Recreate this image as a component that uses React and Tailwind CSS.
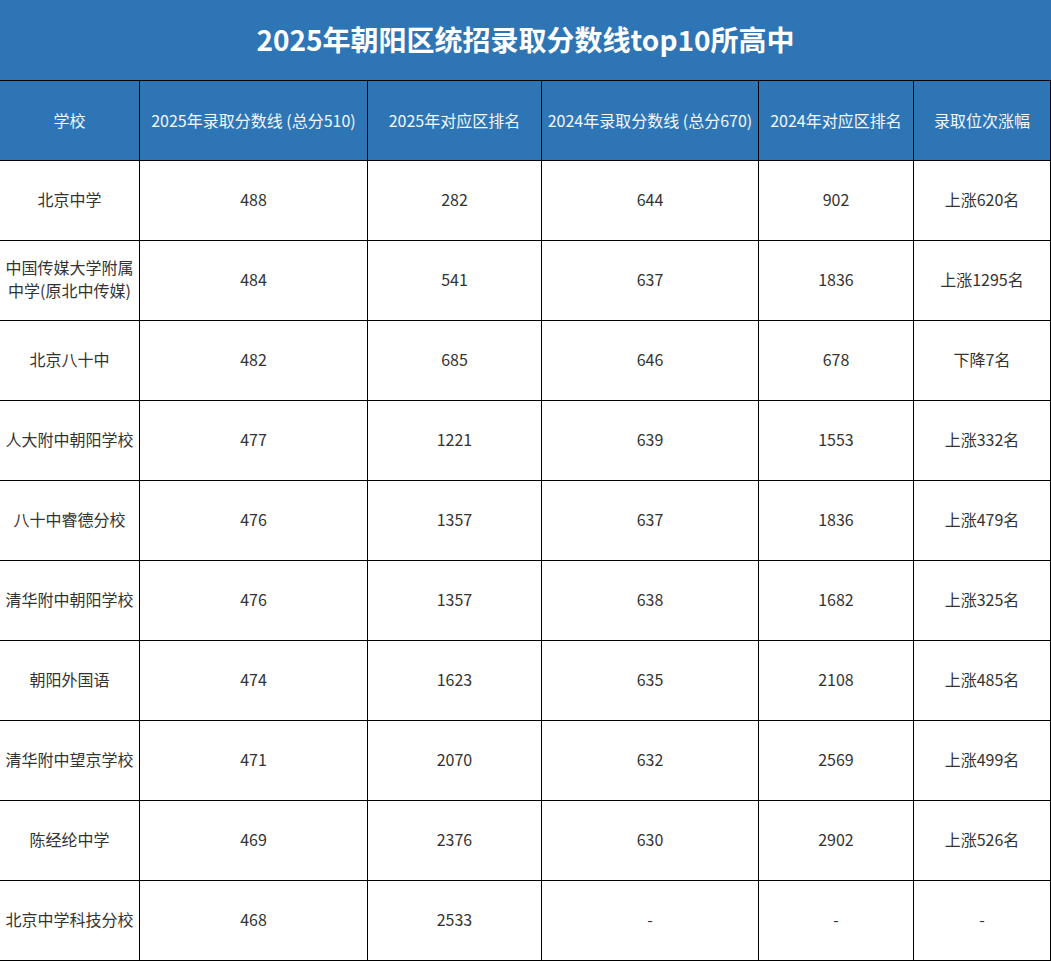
const cols = "grid grid-cols-[140px_228px_174px_217px_155px_137px]";

const rows = [
  ["北京中学", "488", "282", "644", "902", "上涨620名"],
  ["中国传媒大学附属中学(原北中传媒)", "484", "541", "637", "1836", "上涨1295名"],
  ["北京八十中", "482", "685", "646", "678", "下降7名"],
  ["人大附中朝阳学校", "477", "1221", "639", "1553", "上涨332名"],
  ["八十中睿德分校", "476", "1357", "637", "1836", "上涨479名"],
  ["清华附中朝阳学校", "476", "1357", "638", "1682", "上涨325名"],
  ["朝阳外国语", "474", "1623", "635", "2108", "上涨485名"],
  ["清华附中望京学校", "471", "2070", "632", "2569", "上涨499名"],
  ["陈经纶中学", "469", "2376", "630", "2902", "上涨526名"],
  ["北京中学科技分校", "468", "2533", "-", "-", "-"],
];

const headers = [
  "学校",
  "2025年录取分数线 (总分510)",
  "2025年对应区排名",
  "2024年录取分数线 (总分670)",
  "2024年对应区排名",
  "录取位次涨幅",
];

export default function App() {
  return (
    <div className="w-[1051px] bg-white font-['Noto_Sans_CJK_SC','Noto_Sans',sans-serif] text-[16px]">
      <div className="flex h-[80px] items-center justify-center bg-[#2e75b6] pb-[2px] text-[28px] font-bold text-white">
        2025年朝阳区统招录取分数线top10所高中
      </div>
      <div className={`${cols} h-[80px] border-t border-black bg-[#2e75b6] text-[#f4f7fb]`}>
        {headers.map((h, i) => (
          <div key={i} className="flex items-center justify-center border-r border-black pb-[2px] text-center leading-tight">
            {h}
          </div>
        ))}
      </div>
      {rows.map((r, ri) => (
        <div key={ri} className={`${cols} h-[80px] border-t border-black text-[#333]`}>
          {r.map((c, ci) => (
            <div
              key={ci}
              className={`flex items-center justify-center border-r border-black pb-[3px] text-center ${ci === 0 ? "px-[4px] leading-[23px]" : ""}`}
            >
              {c}
            </div>
          ))}
        </div>
      ))}
      <div className="h-px bg-black" />
    </div>
  );
}
